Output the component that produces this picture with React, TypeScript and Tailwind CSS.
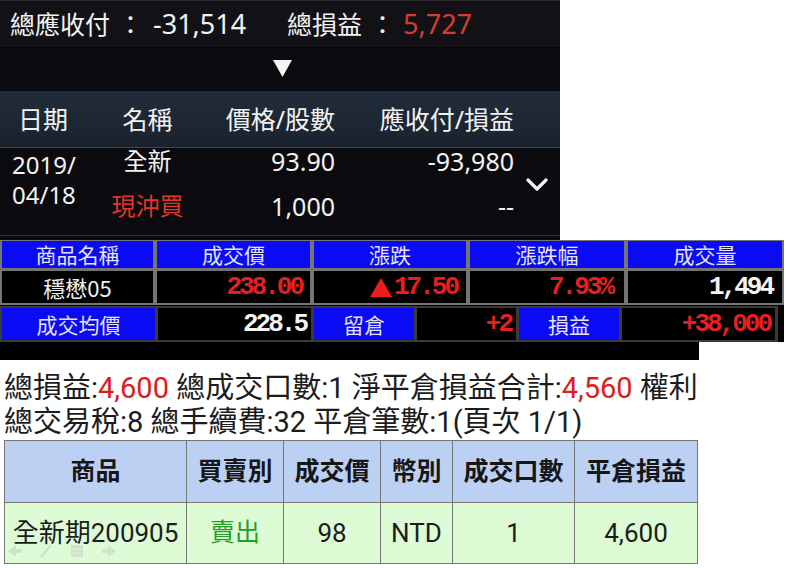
import React from "react";

const cjk = { fontFamily: '"Noto Sans", "Noto Sans CJK TC", sans-serif' };
const roboto = { fontFamily: 'Roboto, "Noto Sans CJK TC", sans-serif' };
const pixel = { fontFamily: '"Noto Sans CJK TC", sans-serif' };
const mono = { fontFamily: '"Liberation Mono", "Noto Sans CJK TC", monospace' };

function PositionPanel() {
  return (
    <div className="w-[560px] h-[240px] bg-[#0b0b0f] text-[#f2f2f2] flex flex-col" style={cjk}>
      <div className="h-[46px] bg-[#121216] border-t border-[#2a2a30] border-b border-b-[#1c1c22] flex items-center pl-[10px] text-[25px] leading-none">
        <span className="w-[277px] whitespace-nowrap">
          總應收付<span className="ml-[8px] mr-[10px]">：</span>
          <span className="text-[27px]">-31,514</span>
        </span>
        <span className="whitespace-nowrap">
          總損益<span className="mx-[8px]">：</span>
          <span className="text-[27px] text-[#dc3a30]">5,727</span>
        </span>
      </div>
      <div className="h-[45px] flex items-center justify-center pl-[4px]">
        <svg width="19" height="17" viewBox="0 0 19 17">
          <polygon points="0,0 19,0 9.5,17" fill="#f4f4f4" />
        </svg>
      </div>
      <div className="h-[57px] bg-gradient-to-b from-[#222c3a] to-[#1a222e] border-b border-[#3c4654] flex items-center text-[25px] leading-none">
        <div className="w-[105px] pl-[18px]">日期</div>
        <div className="w-[85px] text-center">名稱</div>
        <div className="w-[145px] text-right">價格/股數</div>
        <div className="w-[179px] text-right">應收付/損益</div>
      </div>
      <div className="h-[88px] flex border-b border-[#2a2f38]">
        <div className="w-[105px] pl-[12px] pt-[2px] flex flex-col text-[24px] leading-[30px]">
          <span>2019/</span>
          <span>04/18</span>
        </div>
        <div className="w-[85px] flex flex-col items-center gap-[19px] text-[24px] leading-[26px]">
          <span>全新</span>
          <span className="text-[#e0372c]">現沖買</span>
        </div>
        <div className="w-[145px] flex flex-col items-end gap-[19px] text-[25px] leading-[26px]">
          <span>93.90</span>
          <span>1,000</span>
        </div>
        <div className="w-[179px] flex flex-col items-end gap-[19px] text-[25px] leading-[26px]">
          <span>-93,980</span>
          <span>--</span>
        </div>
        <div className="flex-1 flex items-center justify-center pb-[14px]">
          <svg width="22" height="14" viewBox="0 0 22 14">
            <polyline points="2,2 11,11 20,2" fill="none" stroke="#f4f4f4" strokeWidth="3.2" strokeLinecap="round" strokeLinejoin="round" />
          </svg>
        </div>
      </div>
    </div>
  );
}

function Cell({ blue, children, pr = "", className = "" }: { blue?: boolean; children: React.ReactNode; pr?: string; className?: string }) {
  return (
    <div
      className={`${blue ? "bg-[#0a0af4]" : "bg-black"} flex items-center ${pr ? `justify-end ${pr}` : "justify-center"} ${className}`}
    >
      {children}
    </div>
  );
}

function QuoteBoard() {
  const head = "text-[21px] leading-none text-[#e4e4f2]";
  const num = "text-[26px] leading-none font-bold tracking-[-3px]";
  return (
    <div className="w-[784px] h-[102px] bg-black flex flex-col">
      <div className="grid grid-cols-[151px_153px_152px_154px_154px] grid-rows-[27px_32px] gap-x-[4px] gap-y-[3px] bg-[#747474] pt-[1px] px-[2px] pb-[2px]">
        <Cell blue><span className={head} style={pixel}>商品名稱</span></Cell>
        <Cell blue><span className={head} style={pixel}>成交價</span></Cell>
        <Cell blue><span className={head} style={pixel}>漲跌</span></Cell>
        <Cell blue><span className={head} style={pixel}>漲跌幅</span></Cell>
        <Cell blue><span className={head} style={pixel}>成交量</span></Cell>
        <Cell><span className="text-[22px] leading-none text-[#f0f0f0]" style={pixel}>穩懋05</span></Cell>
        <Cell pr="pr-[8px]"><span className={`${num} text-[#e62020]`} style={mono}>238.00</span></Cell>
        <Cell pr="pr-[9px]">
          <svg width="22" height="19" viewBox="0 0 22 19" className="mr-[2px]">
            <polygon points="11,0 22,19 0,19" fill="#f01c1c" />
          </svg>
          <span className={`${num} text-[#f01c1c]`} style={mono}>17.50</span>
        </Cell>
        <Cell pr="pr-[12px]"><span className={`${num} text-[#e62020]`} style={mono}>7.93%</span></Cell>
        <Cell pr="pr-[10px]"><span className={`${num} text-[#f4f4f4]`} style={mono}>1,494</span></Cell>
      </div>
      <div className="mt-[1px] w-[778px] h-[36px] bg-[#3a3a3a] p-[2px] flex gap-[3px]">
        <Cell blue className="w-[153px]"><span className={head} style={pixel}>成交均價</span></Cell>
        <Cell pr="pr-[5px]" className="w-[153px]"><span className={`${num} text-[#f4f4f4]`} style={mono}>228.5</span></Cell>
        <Cell blue className="w-[100px]"><span className={head} style={pixel}>留倉</span></Cell>
        <Cell pr="pr-[5px]" className="w-[99px]"><span className={`${num} text-[#e62020]`} style={mono}>+2</span></Cell>
        <Cell blue className="w-[100px]"><span className={head} style={pixel}>損益</span></Cell>
        <Cell pr="pr-[5px]" className="w-[153px]"><span className={`${num} text-[#e62020]`} style={mono}>+38,000</span></Cell>
      </div>
    </div>
  );
}

function SettlementPanel() {
  const heads = ["商品", "買賣別", "成交價", "幣別", "成交口數", "平倉損益"];
  return (
    <div className="w-[699px] h-[226px] flex flex-col" style={roboto}>
      <div className="h-[18px] bg-black" />
      <div className="relative flex-1 bg-white pl-[4px] pt-[11px] text-[#1c1c1c]">
        <div className="text-[29px] leading-[34px] whitespace-nowrap">
          總損益:<span className="text-[#dd1c1c]">4,600</span> 總成交口數:1 淨平倉損益合計:<span className="text-[#dd1c1c]">4,560</span> 權利
        </div>
        <div className="text-[29px] leading-[34px] whitespace-nowrap">
          總交易稅:8 總手續費:32 平倉筆數:1(頁次 1/1)
        </div>
        <div className="mt-[1px] w-[694px] bg-[#767676] p-[1px] grid grid-cols-[181px_96px_96px_71px_121px_122px] grid-rows-[61px_60px] gap-[1px]">
          {heads.map((h) => (
            <div key={h} className="bg-[#bcd0f3] flex items-center justify-center text-[25px] font-bold text-[#161616]">
              {h}
            </div>
          ))}
          <div className="bg-[#ddfcd5] flex items-center justify-center text-[26px]">全新期200905</div>
          <div className="bg-[#ddfcd5] flex items-center justify-center text-[25px] text-[#23a023]">賣出</div>
          <div className="bg-[#ddfcd5] flex items-center justify-center text-[26px]">98</div>
          <div className="bg-[#ddfcd5] flex items-center justify-center text-[26px]">NTD</div>
          <div className="bg-[#ddfcd5] flex items-center justify-center text-[26px]">1</div>
          <div className="bg-[#ddfcd5] flex items-center justify-center text-[26px]">4,600</div>
        </div>
        <div className="absolute left-[8px] top-[184px] flex items-center gap-[18px] opacity-40">
          <svg width="14" height="12" viewBox="0 0 14 12"><polygon points="0,6 8,0 8,4 14,4 14,8 8,8 8,12" fill="#bdbdbd" /></svg>
          <svg width="12" height="14" viewBox="0 0 12 14"><line x1="1" y1="13" x2="11" y2="1" stroke="#bdbdbd" strokeWidth="2.5" /></svg>
          <svg width="14" height="14" viewBox="0 0 14 14"><rect x="1" y="1" width="12" height="12" fill="#bdbdbd" /><line x1="3" y1="5" x2="11" y2="5" stroke="#eee" /><line x1="3" y1="9" x2="11" y2="9" stroke="#eee" /></svg>
          <svg width="14" height="12" viewBox="0 0 14 12"><polygon points="14,6 6,0 6,4 0,4 0,8 6,8 6,12" fill="#bdbdbd" /></svg>
        </div>
      </div>
    </div>
  );
}

export default function App() {
  return (
    <div className="w-[786px] h-[568px] bg-white overflow-hidden">
      <PositionPanel />
      <QuoteBoard />
      <SettlementPanel />
    </div>
  );
}
